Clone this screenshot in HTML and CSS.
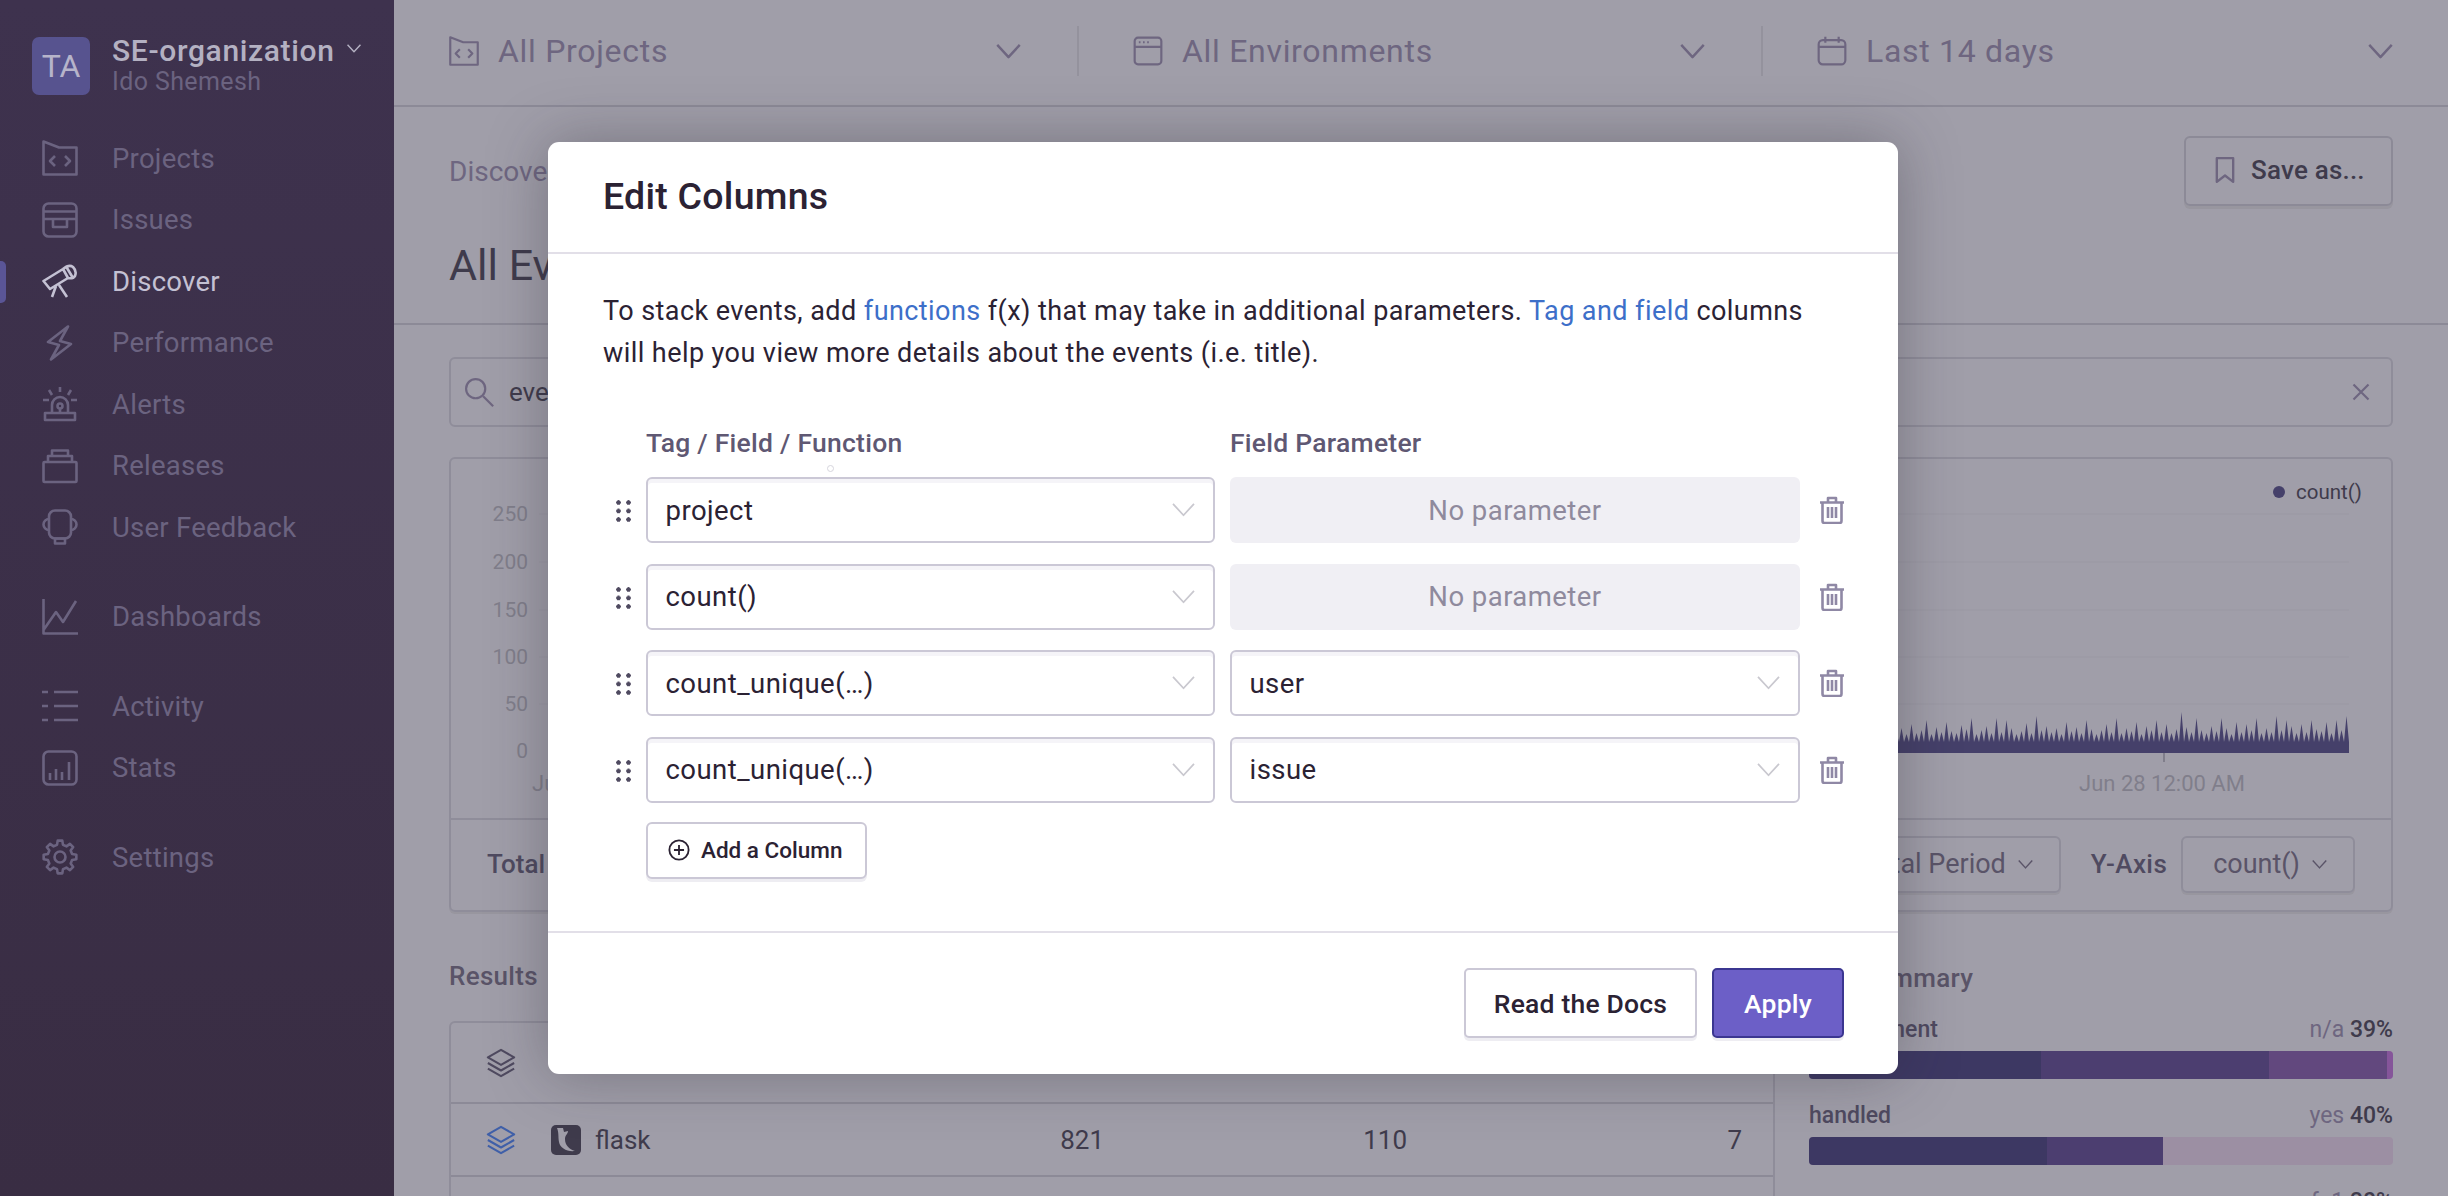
FILE: index.html
```html
<!DOCTYPE html>
<html lang="en">
<head>
  <meta charset="UTF-8" />
  <title>Discover - All Events</title>
  <link rel="stylesheet" href="styles.css">
</head>
<body>

<svg class="sprite" xmlns="http://www.w3.org/2000/svg">
  <symbol id="i-projects" viewBox="0 0 36 36"><path d="M1.5 1.5 17 7.5H34.5V34.5H1.5Z"/><path d="M13 16l-5 5 5 5M23 16l5 5-5 5"/></symbol>
  <symbol id="i-issues" viewBox="0 0 36 36"><rect x="1.5" y="1.5" width="33" height="33" rx="5"/><path d="M1.5 9.5h33M1.5 17h33M11 17v8h14v-8"/></symbol>
  <symbol id="i-discover" viewBox="0 0 36 36"><path d="M1.5 18 21 6l5 9-18 11ZM21 6q6-5 10-2 4 4 2 9-2 3-7 2M25 5l6 10M14 23l-4 11M17 22l8 12"/></symbol>
  <symbol id="i-performance" viewBox="0 0 36 36"><path d="M26 1.5 6 17l11 3-8 14.5L29 19l-11-3Z"/></symbol>
  <symbol id="i-alerts" viewBox="0 0 36 36"><path d="M10 27V19a8 8 0 0 1 16 0v8M3 27h30v7H3ZM18 1v5M7 4l3 5M29 4l-3 5M1 14h6M29 14h6M18 23v4"/><circle cx="18" cy="20" r="2.5"/></symbol>
  <symbol id="i-releases" viewBox="0 0 36 36"><rect x="1.5" y="14" width="33" height="20" rx="1"/><path d="M6 14V8h24v6M10 8V2.500h16V8"/></symbol>
  <symbol id="i-feedback" viewBox="0 0 36 36"><rect x="7" y="1.500" width="22" height="28" rx="6"/><path d="M7 10a5.500 5.500 0 0 0 0 11M29 10a5.500 5.500 0 0 1 0 11M13 29.500h10v5H13Z"/></symbol>
  <symbol id="i-dashboards" viewBox="0 0 36 36"><path d="M1.500 0V34.500H36M1.500 31 14 13l7 10L34 2"/></symbol>
  <symbol id="i-activity" viewBox="0 0 36 36"><path d="M0 4h6M12 4h24M0 18h6M12 18h24M0 32h6M12 32h24"/></symbol>
  <symbol id="i-stats" viewBox="0 0 36 36"><rect x="1.500" y="1.500" width="33" height="33" rx="5"/><path d="M8 30v-7M14 30V19M20 30v-8M27 30V12"/></symbol>
  <symbol id="i-settings" viewBox="0 0 36 36"><path d="M15 5.900 15.700 1.660H20.300L21 5.900 24.430 7.320 27.930 4.820 31.180 8.070 28.680 11.570 30.100 15 34.340 15.700V20.300L30.100 21 28.680 24.430 31.180 27.930 27.930 31.180 24.430 28.680 21 30.100 20.300 34.340H15.700L15 30.100 11.570 28.680 8.070 31.180 4.820 27.930 7.320 24.430 5.900 21 1.660 20.300V15.700L5.900 15 7.320 11.570 4.820 8.070 8.070 4.820 11.570 7.320Z"/><circle cx="18" cy="18" r="5.500"/></symbol>
  <symbol id="i-env" viewBox="0 0 36 36"><rect x="2" y="2" width="32" height="32" rx="4"/><path d="M2 13h32M7 7.500h2M12 7.500h2M17 7.500h2"/></symbol>
  <symbol id="i-calendar" viewBox="0 0 36 36"><rect x="2" y="5" width="32" height="29" rx="5"/><path d="M2 13h32M10 1v7M26 1v7"/></symbol>
  <symbol id="i-chevron" viewBox="0 0 26 16"><path d="M1 1l12 13L25 1"/></symbol>
  <symbol id="i-search" viewBox="0 0 36 36"><circle cx="14" cy="14" r="11.500"/><path d="M23 23l12 12"/></symbol>
  <symbol id="i-close" viewBox="0 0 24 24"><path d="M3 3l18 18M21 3 3 21"/></symbol>
  <symbol id="i-bookmark" viewBox="0 0 22 30"><path d="M2 2h18v26l-9-7-9 7Z"/></symbol>
  <symbol id="i-layers" viewBox="0 0 32 32"><path d="M16 2 30 10 16 18 2 10ZM2 16l14 8 14-8M2 22l14 8 14-8"/></symbol>
  <symbol id="i-trash" viewBox="0 0 26 28"><path d="M1 6.500h24M9 6.500V2h8v4.500M3.500 6.500V25a2 2 0 0 0 2 2h15a2 2 0 0 0 2-2V6.500M9 11v11M13 11v11M17 11v11"/></symbol>
  <symbol id="i-plus" viewBox="0 0 24 24"><circle cx="12" cy="12" r="10.500"/><path d="M12 6.500v11M6.500 12h11"/></symbol>
</svg>

<div class="app">
  <aside class="sidebar">
    <div class="org">
      <div class="org-avatar">TA</div>
      <div class="org-text">
        <div class="org-name">SE-organization <svg class="ico org-chevron"><use href="#i-chevron"/></svg></div>
        <div class="org-user">Ido Shemesh</div>
      </div>
    </div>
    <nav class="nav-group first">
      <a class="nav-item"><svg class="ico"><use href="#i-projects"/></svg>Projects</a>
      <a class="nav-item"><svg class="ico"><use href="#i-issues"/></svg>Issues</a>
      <a class="nav-item active"><svg class="ico"><use href="#i-discover"/></svg>Discover</a>
      <a class="nav-item"><svg class="ico"><use href="#i-performance"/></svg>Performance</a>
      <a class="nav-item"><svg class="ico"><use href="#i-alerts"/></svg>Alerts</a>
      <a class="nav-item"><svg class="ico"><use href="#i-releases"/></svg>Releases</a>
      <a class="nav-item"><svg class="ico"><use href="#i-feedback"/></svg>User Feedback</a>
    </nav>
    <nav class="nav-group">
      <a class="nav-item"><svg class="ico"><use href="#i-dashboards"/></svg>Dashboards</a>
    </nav>
    <nav class="nav-group">
      <a class="nav-item"><svg class="ico"><use href="#i-activity"/></svg>Activity</a>
      <a class="nav-item"><svg class="ico"><use href="#i-stats"/></svg>Stats</a>
    </nav>
    <nav class="nav-group">
      <a class="nav-item"><svg class="ico"><use href="#i-settings"/></svg>Settings</a>
    </nav>
  </aside>

  <main class="main">
    <header class="topbar">
      <div class="selector">
        <svg class="ico"><use href="#i-projects"/></svg>
        <span class="selector-label">All Projects</span>
        <svg class="ico selector-chevron"><use href="#i-chevron"/></svg>
      </div>
      <div class="selector">
        <svg class="ico"><use href="#i-env"/></svg>
        <span class="selector-label">All Environments</span>
        <svg class="ico selector-chevron"><use href="#i-chevron"/></svg>
      </div>
      <div class="selector">
        <svg class="ico"><use href="#i-calendar"/></svg>
        <span class="selector-label">Last 14 days</span>
        <svg class="ico selector-chevron"><use href="#i-chevron"/></svg>
      </div>
    </header>

    <section class="page-head">
      <div>
        <div class="crumb">Discover</div>
        <h1 class="page-title">All Events</h1>
      </div>
      <button type="button" class="btn-save"><svg class="ico"><use href="#i-bookmark"/></svg>Save as...</button>
    </section>

    <div class="content">
      <div class="search">
        <svg class="ico search-icon"><use href="#i-search"/></svg>
        <span class="search-text">event.type:error</span>
        <svg class="ico search-close"><use href="#i-close"/></svg>
      </div>

      <section class="chart">
        <svg class="chart-plot" viewBox="0 0 1940 359">
          <g class="grid-lines">
            <path d="M88 55H1898M88 103H1898M88 151H1898M88 198H1898M88 245H1898"/>
          </g>
          <g class="axis-labels">
            <text x="77" y="62">250</text>
            <text x="77" y="110">200</text>
            <text x="77" y="158">150</text>
            <text x="77" y="205">100</text>
            <text x="77" y="252">50</text>
            <text x="77" y="299">0</text>
          </g>
          <text class="axis-date" x="81" y="332">Jun 14</text>
          <text class="axis-date middle" x="1711" y="332">Jun 28 12:00 AM</text>
          <path class="axis-tick" d="M1713 293v10"/>
          <path class="spikes" d="M1443 294V283l2.500-10 2.500 10 2.500-14 2.500 14 2.500-8 2.500 8 2.500-18 2.500 18 2.500-9 2.500 9 2.500-12 2.500 12 2.500-22 2.500 22 2.500-8 2.500 8 2.500-15 2.500 15 2.500-10 2.500 10 2.500-20 2.500 20 2.500-11 2.500 11 2.500-9 2.500 9 2.500-17 2.500 17 2.500-13 2.500 13 2.500-24 2.500 24 2.500-8 2.500 8 2.500-12 2.500 12 2.500-16 2.500 16 2.500-9 2.500 9 2.500-24 2.500 24 2.500-10 2.500 10 2.500-22 2.500 22 2.500-14 2.500 14 2.500-8 2.500 8 2.500-11 2.500 11 2.500-19 2.500 19 2.500-9 2.500 9 2.500-26 2.500 26 2.500-12 2.500 12 2.500-16 2.500 16 2.500-10 2.500 10 2.500-14 2.500 14 2.500-8 2.500 8 2.500-20 2.500 20 2.500-11 2.500 11 2.500-15 2.500 15 2.500-9 2.500 9 2.500-22 2.500 22 2.500-13 2.500 13 2.500-8 2.500 8 2.500-12 2.500 12 2.500-18 2.500 18 2.500-10 2.500 10 2.500-24 2.500 24 2.500-9 2.500 9 2.500-14 2.500 14 2.500-11 2.500 11 2.500-20 2.500 20 2.500-8 2.500 8 2.500-16 2.500 16 2.500-12 2.500 12 2.500-22 2.500 22 2.500-10 2.500 10 2.500-18 2.500 18 2.500-9 2.500 9 2.500-13 2.500 13 2.500-30 2.500 30 2.500-15 2.500 15 2.500-10 2.500 10 2.500-24 2.500 24 2.500-12 2.500 12 2.500-9 2.500 9 2.500-16 2.500 16 2.500-11 2.500 11 2.500-24 2.500 24 2.500-14 2.500 14 2.500-8 2.500 8 2.500-20 2.500 20 2.500-10 2.500 10 2.500-18 2.500 18 2.500-12 2.500 12 2.500-24 2.500 24 2.500-9 2.500 9 2.500-14 2.500 14 2.500-10 2.500 10 2.500-26 2.500 26 2.500-12 2.500 12 2.500-22 2.500 22 2.500-16 2.500 16 2.500-9 2.500 9 2.500-18 2.500 18 2.500-10 2.500 10 2.500-22 2.500 22 2.500-13 2.500 13 2.500-11 2.500 11 2.500-20 2.500 20 2.500-9 2.500 9 2.500-22 2.500 22 2.500-12 2.500 12 2.500-26 2.500 26V294Z"/>
          <circle class="legend-dot" cx="1828" cy="33" r="6"/>
          <text class="legend-text" x="1845" y="40">count()</text>
        </svg>
        <div class="chart-footer">
          <div class="chart-total"><strong>Total Events</strong> 3,912</div>
          <div class="chart-controls">
            <span class="control-label">Display</span>
            <button type="button" class="btn-control">Total Period <svg class="ico"><use href="#i-chevron"/></svg></button>
            <span class="control-label">Y-Axis</span>
            <button type="button" class="btn-control">count() <svg class="ico"><use href="#i-chevron"/></svg></button>
          </div>
        </div>
      </section>

      <div class="lower">
        <section>
          <h3 class="section-title">Results</h3>
          <div class="table">
            <div class="table-row table-head">
              <svg class="ico layer-icon"><use href="#i-layers"/></svg>
              <span class="cell-project">project</span>
              <span class="cell-num">count</span>
              <span class="cell-num">count_unique</span>
              <span class="cell-num">count_unique</span>
            </div>
            <div class="table-row">
              <svg class="ico layer-icon blue"><use href="#i-layers"/></svg>
              <span class="cell-project"><span class="flask-badge"><svg viewBox="0 0 30 30"><path d="M6 3c2 5 1 8 2 14 1 6 8 10 16 9-6-2-10-6-10-12 0-4 3-5 3-8l-4 1-1-4z"/></svg></span>flask</span>
              <span class="cell-num">821</span>
              <span class="cell-num">110</span>
              <span class="cell-num">7</span>
            </div>
            <div class="table-row"></div>
          </div>
        </section>

        <section class="summary">
          <h3 class="section-title">Tag Summary</h3>
          <div class="facet">
            <div class="facet-head"><span class="facet-name">environment</span><span class="facet-value">n/a <b>39%</b></span></div>
            <div class="facet-bar">
              <span class="seg seg-1" style="width:39.7%"></span>
              <span class="seg seg-2" style="width:39%"></span>
              <span class="seg seg-3" style="width:20.3%"></span>
              <span class="seg seg-4" style="width:1%"></span>
            </div>
          </div>
          <div class="facet">
            <div class="facet-head"><span class="facet-name">handled</span><span class="facet-value">yes <b>40%</b></span></div>
            <div class="facet-bar">
              <span class="seg seg-1" style="width:40.8%"></span>
              <span class="seg seg-2" style="width:19.9%"></span>
            </div>
          </div>
          <div class="facet">
            <div class="facet-head"><span class="facet-name">server_name</span><span class="facet-value">fa1 <b>30%</b></span></div>
          </div>
        </section>
      </div>
    </div>
  </main>
</div>

<div class="modal">
  <div class="modal-header"><h2 class="modal-title">Edit Columns</h2></div>
  <div class="modal-body">
    <p class="modal-intro">To stack events, add <a>functions</a> f(x) that may take in additional parameters. <a>Tag and field</a> columns will help you view more details about the events (i.e. title).</p>

    <div class="col-labels">
      <span>Tag / Field / Function</span>
      <span>Field Parameter</span>
    </div>

    <div class="col-row">
      <span class="drag"></span>
      <div class="field"><span>project</span><svg class="ico"><use href="#i-chevron"/></svg></div>
      <div class="field-empty">No parameter</div>
      <svg class="ico trash"><use href="#i-trash"/></svg>
    </div>
    <div class="col-row">
      <span class="drag"></span>
      <div class="field"><span>count()</span><svg class="ico"><use href="#i-chevron"/></svg></div>
      <div class="field-empty">No parameter</div>
      <svg class="ico trash"><use href="#i-trash"/></svg>
    </div>
    <div class="col-row">
      <span class="drag"></span>
      <div class="field"><span>count_unique(…)</span><svg class="ico"><use href="#i-chevron"/></svg></div>
      <div class="field"><span>user</span><svg class="ico"><use href="#i-chevron"/></svg></div>
      <svg class="ico trash"><use href="#i-trash"/></svg>
    </div>
    <div class="col-row">
      <span class="drag"></span>
      <div class="field"><span>count_unique(…)</span><svg class="ico"><use href="#i-chevron"/></svg></div>
      <div class="field"><span>issue</span><svg class="ico"><use href="#i-chevron"/></svg></div>
      <svg class="ico trash"><use href="#i-trash"/></svg>
    </div>

    <button type="button" class="btn-add"><svg class="ico"><use href="#i-plus"/></svg>Add a Column</button>
  </div>
  <div class="modal-footer">
    <button type="button" class="btn-docs">Read the Docs</button>
    <button type="button" class="btn-apply">Apply</button>
  </div>
  <span class="cursor-ring"></span>
</div>

</body>
</html>
```

FILE: styles.css
```css
* {
  box-sizing: border-box;
}
html, body {
  height: 100%;
}
body {
  margin: 0;
  overflow: hidden;
  font-family: Roboto, "Noto Sans", sans-serif;
  color: #3f3b4c;
  background: #a09ea9;
}
button {
  font-family: inherit;
}
.sprite {
  display: none;
}
.ico {
  fill: none;
  stroke: currentColor;
  stroke-width: 2.6;
  stroke-linejoin: round;
  flex: none;
}

.app {
  display: flex;
  height: 1196px;
}

/* sidebar */
.sidebar {
  width: 394px;
  flex: none;
  padding-top: 37px;
  background: linear-gradient(180deg, #3e324e, #392d43);
  color: #6b6380;
}
.org {
  display: flex;
  gap: 22px;
  padding-left: 32px;
}
.org-avatar {
  width: 58px;
  height: 58px;
  border-radius: 7px;
  background: #57538f;
  color: #b6b4ca;
  font-size: 32px;
  display: flex;
  align-items: center;
  justify-content: center;
}
.org-name {
  font-size: 30px;
  font-weight: 500;
  line-height: 28px;
  letter-spacing: 0.65px;
  color: #b4b1c2;
  white-space: nowrap;
}
.org-chevron {
  width: 14px;
  height: 9px;
  margin: 0 0 8px 4px;
}
.org-user {
  font-size: 25px;
  line-height: 30px;
  letter-spacing: 0.4px;
  margin-top: 2px;
}
.nav-group {
  margin-top: 28px;
}
.nav-group.first {
  margin-top: 30.500px;
}
.nav-item {
  position: relative;
  display: flex;
  align-items: center;
  gap: 34px;
  height: 61.500px;
  padding-left: 42px;
  font-size: 27.500px;
  letter-spacing: 0.25px;
}
.nav-item .ico {
  width: 36px;
  height: 36px;
}
.nav-item.active {
  color: #c4c1d3;
}
.nav-item.active::before {
  content: "";
  position: absolute;
  left: 0;
  top: 10px;
  width: 6px;
  height: 42px;
  border-radius: 0 5px 5px 0;
  background: #5a5596;
}

/* main column */
.main {
  flex: 1;
  min-width: 0;
}
.topbar {
  display: flex;
  height: 107px;
  padding: 26px 55px 0;
  border-bottom: 2px solid #8c8a97;
}
.selector {
  flex: none;
  width: 630px;
  display: flex;
  align-items: center;
  gap: 19px;
  height: 50px;
  padding-right: 56px;
  margin-right: 54px;
  border-right: 2px solid #94929d;
  color: #6e6680;
  font-size: 32px;
  letter-spacing: 0.7px;
}
.selector:last-child {
  flex: 1;
  border-right: 0;
  margin-right: 0;
  padding-right: 0;
}
.selector .ico {
  width: 30px;
  height: 30px;
}
.selector .selector-chevron {
  width: 25px;
  height: 15px;
  margin-left: auto;
}
.page-head {
  display: flex;
  justify-content: space-between;
  height: 218px;
  padding: 29px 55px 0;
  border-bottom: 2px solid #8c8a97;
}
.crumb {
  margin-top: 19px;
  font-size: 28px;
  color: #6e6680;
}
.page-title {
  margin: 52px 0 0;
  font-size: 43px;
  font-weight: 400;
  color: #3f3b4c;
}
.btn-save {
  display: flex;
  align-items: center;
  gap: 16px;
  width: 209px;
  height: 70px;
  padding: 0 0 3px 29px;
  border: 2px solid #8c8a97;
  border-radius: 6px;
  background: transparent;
  box-shadow: 0 3px 0 #98969f;
  color: #3f3b4c;
  font-size: 26px;
  font-weight: 500;
  letter-spacing: 0.2px;
}
.btn-save .ico {
  width: 20px;
  height: 28px;
  color: #6e6680;
}
.content {
  padding: 32px 55px 0;
}
.search {
  display: flex;
  align-items: center;
  height: 70px;
  padding: 0 20px 0 13px;
  border: 2px solid #8f8d9a;
  border-radius: 6px;
}
.search-icon {
  width: 30px;
  height: 30px;
  color: #6e6680;
}
.search-text {
  margin-left: 15px;
  font-size: 26px;
}
.search-close {
  width: 20px;
  height: 20px;
  margin-left: auto;
  color: #6e6680;
}

/* chart */
.chart {
  margin-top: 30px;
  height: 455px;
  border: 2px solid #8f8d9a;
  border-radius: 6px;
  box-shadow: 0 2px 0 #98969f;
}
.chart-plot {
  display: block;
  width: 1940px;
  height: 361px;
  border-bottom: 2px solid #8f8d9a;
}
.grid-lines path {
  fill: none;
  stroke: #9a98a3;
  stroke-width: 1;
}
.axis-labels text {
  font-size: 21px;
  text-anchor: end;
  fill: #807e8b;
}
.axis-date {
  font-size: 22px;
  fill: #807e8b;
}
.axis-date.middle {
  text-anchor: middle;
}
.axis-tick {
  stroke: #807e8b;
  stroke-width: 2;
}
.spikes, .legend-dot {
  fill: #45406a;
}
.legend-text {
  font-size: 20.500px;
  fill: #3f3b4c;
}
.chart-footer {
  display: flex;
  align-items: center;
  justify-content: space-between;
  height: 88px;
  padding: 0 36px;
}
.chart-total {
  font-size: 26px;
}
.chart-total strong {
  font-weight: 500;
  color: #4f4a60;
}
.chart-controls {
  display: flex;
  align-items: center;
  font-size: 26px;
}
.control-label {
  font-weight: 500;
  letter-spacing: 0.4px;
  color: #4f4a60;
  margin-right: 14px;
}
.btn-control {
  display: flex;
  align-items: center;
  gap: 12px;
  height: 57px;
  margin-right: 30px;
  padding: 0 26px 0 30px;
  border: 2px solid #8f8d9a;
  border-radius: 6px;
  background: transparent;
  box-shadow: 0 2px 0 #98969f;
  color: #5a5468;
  font-size: 27px;
}
.btn-control:last-child {
  margin-right: 0;
}
.btn-control .ico {
  width: 15px;
  height: 9px;
}

/* results and tag summary */
.lower {
  display: grid;
  grid-template-columns: 1326px 584px;
  gap: 34px;
  margin-top: 49px;
}
.summary {
  padding-top: 1.500px;
}
.section-title {
  margin: 0;
  font-size: 26px;
  line-height: 30px;
  font-weight: 500;
  letter-spacing: 0.3px;
  color: #5a5468;
}
.table {
  margin-top: 30px;
  border: 2px solid #8f8d9a;
  border-bottom: 0;
  border-radius: 6px 6px 0 0;
}
.table-row {
  display: grid;
  grid-template-columns: 100px 1fr 130px 303px 335px;
  align-items: center;
  height: 73px;
  border-bottom: 2px solid #8c8a97;
  font-size: 26px;
}
.table-head {
  height: 81px;
  color: #5a5468;
}
.table-head span {
  padding-bottom: 22px;
}
.layer-icon {
  width: 30px;
  height: 30px;
  margin-left: 35px;
  color: #4f4a60;
  stroke-width: 2.2;
}
.layer-icon.blue {
  color: #3f5fa8;
}
.cell-project {
  display: flex;
  align-items: center;
  gap: 14px;
}
.cell-num {
  text-align: right;
  padding-right: 31px;
}
.flask-badge {
  width: 30px;
  height: 30px;
  border-radius: 5px;
  background: #3f3b4c;
}
.flask-badge svg {
  display: block;
  fill: #a09ea9;
}
.facet {
  margin-top: 23px;
}
.facet-head {
  display: flex;
  justify-content: space-between;
  font-size: 23px;
  line-height: 28px;
}
.facet-name {
  font-weight: 500;
  color: #4f4a60;
}
.facet-value {
  color: #6e6680;
}
.facet-value b {
  font-weight: 500;
  color: #3f3b4c;
}
.facet-bar {
  display: flex;
  height: 28px;
  margin-top: 7px;
  border-radius: 4px;
  overflow: hidden;
  background: #9c8fa3;
}
.seg {
  display: block;
}
.seg-1 { background: #3d3863; }
.seg-2 { background: #4c3e70; }
.seg-3 { background: #62487e; }
.seg-4 { background: #85559a; }

/* modal */
.modal {
  position: absolute;
  left: 548px;
  top: 142px;
  width: 1350px;
  height: 932px;
  display: flex;
  flex-direction: column;
  border-radius: 11px;
  background: #fff;
  color: #2b2233;
  box-shadow: 0 0 60px rgba(40, 36, 50, 0.35);
}
.modal-header {
  height: 112px;
  padding: 0 55px;
  display: flex;
  align-items: center;
  border-bottom: 2px solid #e2dfe8;
}
.modal-title {
  margin: 0 0 2px;
  font-size: 37.500px;
  font-weight: 500;
  letter-spacing: 0.25px;
}
.modal-body {
  height: 679px;
  padding: 36px 55px 0;
  border-bottom: 2px solid #e2dfe8;
}
.modal-intro {
  margin: 0;
  font-size: 27px;
  line-height: 42px;
  letter-spacing: 0.43px;
}
.modal-intro a {
  color: #3d6fc9;
}
.col-labels {
  display: grid;
  grid-template-columns: 569px 1fr;
  gap: 15px;
  margin: 54px 0 0 43px;
  font-size: 26.500px;
  line-height: 30px;
  font-weight: 500;
  letter-spacing: 0.25px;
  color: #5f5873;
}
.col-row {
  display: grid;
  grid-template-columns: 569px 570px 26px;
  gap: 15px;
  align-items: center;
  height: 66px;
  margin: 0 0 20.670px 43px;
  position: relative;
}
.col-labels + .col-row {
  margin-top: 19px;
}
.drag {
  position: absolute;
  left: -30px;
  top: 23px;
  width: 15px;
  height: 22px;
  background: radial-gradient(circle at 2.500px 2.500px, #4f4a60 2px, transparent 2.500px) 0 0 / 10px 8.500px;
}
.field, .field-empty {
  height: 66px;
  border-radius: 6px;
  font-size: 27.500px;
  letter-spacing: 0.45px;
  display: flex;
  align-items: center;
}
.field {
  justify-content: space-between;
  padding: 0 18px 0 17.500px;
  border: 2px solid #cbc8d6;
  box-shadow: inset 0 4px 0 #f5f4f8;
}
.field .ico {
  width: 23px;
  height: 14px;
  color: #c9c8cf;
  stroke-width: 2;
}
.field-empty {
  justify-content: center;
  background: #f0eff4;
  color: #8f8a9d;
}
.trash {
  width: 26px;
  height: 28px;
  margin-left: 4px;
  color: #8f88a5;
}
.btn-add {
  display: flex;
  align-items: center;
  gap: 11px;
  width: 221px;
  height: 57px;
  margin: -2px 0 0 43px;
  padding-left: 20px;
  border: 2px solid #cbc8d6;
  border-radius: 6px;
  background: #fff;
  box-shadow: 0 3px 0 #eeedf2;
  color: #2b2233;
  font-size: 22.500px;
  font-weight: 500;
}
.btn-add .ico {
  width: 22px;
  height: 22px;
  stroke-width: 2;
}
.modal-footer {
  display: flex;
  justify-content: flex-end;
  gap: 15px;
  padding: 35px 54px 0;
}
.btn-docs, .btn-apply {
  height: 70px;
  border-radius: 5px;
  font-size: 26.500px;
  font-weight: 500;
  letter-spacing: 0.2px;
}
.btn-docs {
  width: 233px;
  border: 2px solid #cbc8d6;
  background: #fff;
  box-shadow: 0 3px 0 #eeedf2;
  color: #2b2233;
}
.btn-apply {
  width: 132px;
  border: 2px solid #3b3691;
  background: #6c5fc7;
  box-shadow: 0 3px 0 #eeedf2;
  color: #fff;
}
.cursor-ring {
  position: absolute;
  left: 279px;
  top: 323px;
  width: 7px;
  height: 7px;
  border: 1px solid #d6d5dd;
  border-radius: 50%;
}
```
